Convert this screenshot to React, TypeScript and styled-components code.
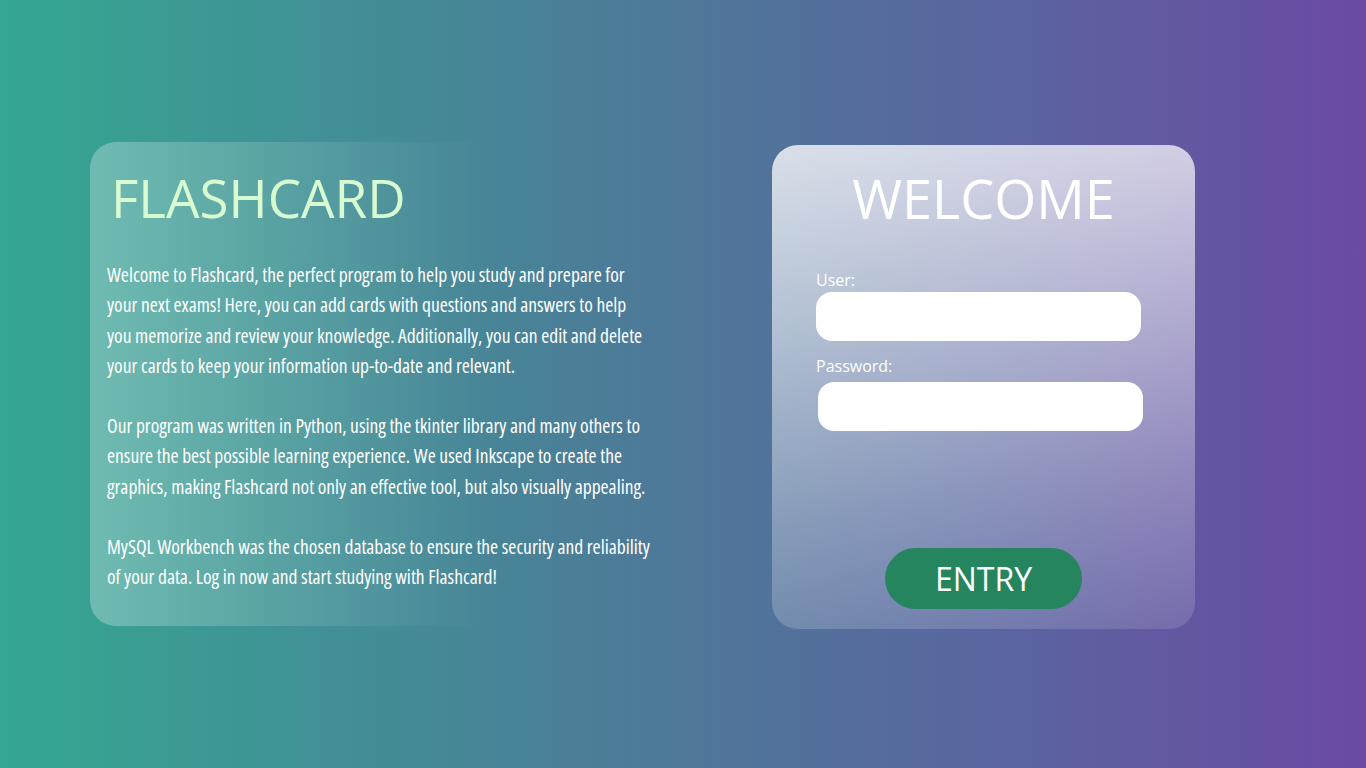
import styled, { createGlobalStyle } from 'styled-components';

// ----------------------------------------------------------------------

const GlobalStyle = createGlobalStyle`
  html, body {
    margin: 0;
    padding: 0;
  }

  body {
    font-family: 'Open Sans', 'Liberation Sans', sans-serif;
  }
`;

const Page = styled.main`
  display: flex;
  align-items: flex-start;
  justify-content: space-between;
  box-sizing: border-box;
  width: 1366px;
  height: 768px;
  padding: 142px 171px 0 90px;
  background: linear-gradient(90deg, #35a792 0%, #4c7c98 45%, #5b63a0 75%, #6b4aa3 100%);
  overflow: hidden;
`;

const InfoCard = styled.section`
  box-sizing: border-box;
  width: 590px;
  height: 484px;
  padding: 22px 0 0 17px;
  border-radius: 26px;
  background: linear-gradient(
    90deg,
    rgba(255, 255, 255, 0.28) 0%,
    rgba(255, 255, 255, 0.12) 35%,
    rgba(255, 255, 255, 0.03) 58%,
    rgba(255, 255, 255, 0) 68%
  );
`;

const Title = styled.h1`
  margin: 0 0 28px 4px;
  font-size: 53px;
  line-height: 68px;
  font-weight: 400;
  color: #d8fbd2;
`;

const Description = styled.p`
  margin: 0 0 30px;
  font-family: 'Open Sans', sans-serif;
  font-stretch: 75%;
  font-size: 19.5px;
  line-height: 30.3px;
  color: #ffffff;
  white-space: pre;
`;

const LoginCard = styled.section`
  display: flex;
  flex-direction: column;
  align-items: center;
  box-sizing: border-box;
  width: 423px;
  height: 484px;
  margin-top: 3px;
  padding: 16px 44px 0;
  border-radius: 26px;
  background: linear-gradient(
    172deg,
    rgba(255, 255, 255, 0.78) 0%,
    rgba(255, 255, 255, 0.55) 35%,
    rgba(255, 255, 255, 0.3) 70%,
    rgba(255, 255, 255, 0.12) 100%
  );
`;

const Heading = styled.h2`
  margin: 0 0 34px;
  font-size: 54px;
  line-height: 74px;
  font-weight: 400;
  color: #ffffff;
`;

const Field = styled.label`
  display: flex;
  flex-direction: column;
  align-self: stretch;
  margin-bottom: 14px;
  font-size: 16px;
  line-height: 22px;
  color: #ffffff;
`;

const Input = styled.input<{ shift?: number }>`
  box-sizing: border-box;
  width: 325px;
  height: 49px;
  margin-top: ${({ type }) => (type === 'password' ? 5 : 1)}px;
  margin-left: ${({ shift }) => shift ?? 0}px;
  padding: 0 16px;
  border: none;
  border-radius: 16px;
  background: #ffffff;
  font-family: 'Open Sans', sans-serif;
  font-size: 16px;
  outline: none;
`;

const EntryButton = styled.button`
  width: 197px;
  height: 61px;
  margin-top: 103px;
  border: none;
  border-radius: 31px;
  background: #25855f;
  font-family: 'Open Sans', sans-serif;
  font-size: 32px;
  line-height: 1;
  color: #ffffff;
  cursor: pointer;
`;

const paragraphs = [
  `Welcome to Flashcard, the perfect program to help you study and prepare for
your next exams! Here, you can add cards with questions and answers to help
you memorize and review your knowledge. Additionally, you can edit and delete
your cards to keep your information up-to-date and relevant.`,
  `Our program was written in Python, using the tkinter library and many others to
ensure the best possible learning experience. We used Inkscape to create the
graphics, making Flashcard not only an effective tool, but also visually appealing.`,
  `MySQL Workbench was the chosen database to ensure the security and reliability
of your data. Log in now and start studying with Flashcard!`,
];

export default function App() {
  return (
    <>
      <GlobalStyle />
      <Page>
        <InfoCard>
          <Title>FLASHCARD</Title>
          {paragraphs.map((text) => (
            <Description key={text.slice(0, 12)}>{text}</Description>
          ))}
        </InfoCard>

        <LoginCard>
          <Heading>WELCOME</Heading>
          <Field>
            User:
            <Input type="text" />
          </Field>
          <Field>
            Password:
            <Input type="password" shift={2} />
          </Field>
          <EntryButton>ENTRY</EntryButton>
        </LoginCard>
      </Page>
    </>
  );
}
